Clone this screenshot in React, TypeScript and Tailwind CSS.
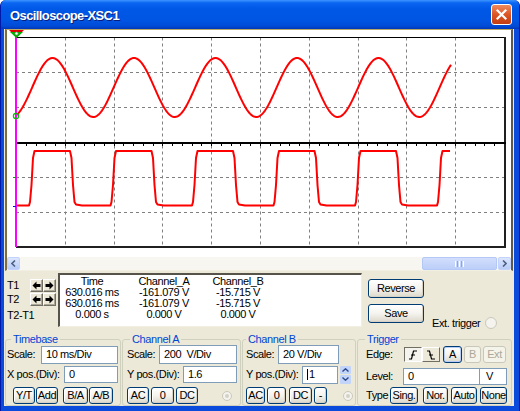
import type { ReactNode } from 'react';

const FONT = "font-['Liberation_Sans',Tahoma,Arial,sans-serif]";

function Btn({
  label,
  className = '',
}: {
  label: string;
  className?: string;
}): JSX.Element {
  return (
    <button
      type="button"
      className={`flex items-center justify-center rounded-[3px] border border-[#003c74] bg-linear-to-b from-white via-[#f4f3ee] to-[#dcd8cb] text-[11px] leading-none tracking-[-0.4px] text-black shadow-[inset_-1px_-1px_0_#d6d0c5,inset_1px_1px_0_#fff] ${className}`}
    >
      {label}
    </button>
  );
}

function GhostBtn({ label, className = '' }: { label: string; className?: string }): JSX.Element {
  return (
    <button
      type="button"
      className={`flex items-center justify-center rounded-[3px] border border-[#c9c7ba] bg-[#f5f4ea] text-[11px] leading-none tracking-[-0.4px] text-[#aca899] ${className}`}
    >
      {label}
    </button>
  );
}

function Field({ children, className = '' }: { children?: ReactNode; className?: string }): JSX.Element {
  return (
    <div
      className={`flex items-center whitespace-pre border border-[#7f9db9] bg-white pl-[4px] text-[11px] leading-none tracking-[-0.4px] text-black ${className}`}
    >
      {children}
    </div>
  );
}

function Label({ text, className = '' }: { text: string; className?: string }): JSX.Element {
  return (
    <span className={`shrink-0 whitespace-nowrap text-[11px] leading-[11px] tracking-[-0.4px] text-black ${className}`}>
      {text}
    </span>
  );
}

function Radio({ className = '' }: { className?: string }): JSX.Element {
  return (
    <span
      className={`flex h-[10px] w-[10px] items-center justify-center rounded-full border border-[#cac8bb] bg-[#f4f3ee] ${className}`}
    >
      <span className="h-[4px] w-[4px] rounded-full bg-[#d4d2c6]" />
    </span>
  );
}

function ArrowBtn({ dir }: { dir: 'left' | 'right' }): JSX.Element {
  return (
    <span className="flex h-[13px] w-[13px] items-center justify-center border-t border-l border-t-white border-l-white border-r border-b border-r-[#716f64] border-b-[#716f64] bg-[#ece9d8] shadow-[inset_-1px_-1px_0_#aca899]">
      <svg width="9" height="9" viewBox="0 0 9 9">
        {dir === 'left' ? (
          <path d="M0.5 4.5 L4.5 0.5 L4.5 3 L8.5 3 L8.5 6 L4.5 6 L4.5 8.5 Z" fill="#000" />
        ) : (
          <path d="M8.5 4.5 L4.5 0.5 L4.5 3 L0.5 3 L0.5 6 L4.5 6 L4.5 8.5 Z" fill="#000" />
        )}
      </svg>
    </span>
  );
}

function ScrollBtn({ dir }: { dir: 'left' | 'right' }): JSX.Element {
  return (
    <span className="flex h-[13px] w-[13px] shrink-0 items-center justify-center rounded-[2px] border border-[#c3d3fd] bg-linear-to-b from-[#dce6fd] to-[#b9cdf7]">
      <svg width="5" height="7" viewBox="0 0 5 7">
        {dir === 'left' ? (
          <path d="M4 0.5 L1 3.5 L4 6.5" fill="none" stroke="#4d6185" strokeWidth="1.6" />
        ) : (
          <path d="M1 0.5 L4 3.5 L1 6.5" fill="none" stroke="#4d6185" strokeWidth="1.6" />
        )}
      </svg>
    </span>
  );
}

function Scope(): JSX.Element {
  const vx = [65.5, 114.5, 162.5, 211.5, 260.5, 309.5, 358.5, 406.5, 455.5];
  const hy = [72.5, 107.5, 177.5, 212.5];
  const ticks = Array.from({ length: 49 }, (_, k) => Math.round(16 + 9.76 * (k + 1)) + 0.5);

  let sine = '';
  for (let x = 16; x <= 451; x += 1) {
    const y = 87.5 - 29.5 * Math.cos((2 * Math.PI * (x - 52.5)) / 81.5);
    sine += `${x === 16 ? 'M' : 'L'}${x} ${y.toFixed(2)} `;
  }

  const rises = [29, 110.5, 192, 273.5, 355, 437];
  let square = 'M16 205.5';
  rises.forEach((r, i) => {
    square += ` L${r} 205.5 L${r + 1} 202 L${r + 2.5} 185 L${r + 4} 158 L${r + 5.5} 151`;
    const f = r + 41;
    if (i < rises.length - 1) {
      square += ` L${f} 151 L${f + 1.5} 158 L${f + 3} 185 L${f + 4.5} 202 L${f + 6} 204.5 L${f + 12} 205.5`;
    } else {
      square += ' L450 151';
    }
  });

  return (
    <svg width="504" height="227" viewBox="7 30 504 227" className="block bg-white">
      {/* grid */}
      {vx.map((x) => (
        <line key={x} x1={x} y1={37.5} x2={x} y2={247} stroke="#808080" strokeDasharray="3 3" />
      ))}
      {hy.map((y) => (
        <line key={y} x1={16} y1={y} x2={505} y2={y} stroke="#808080" strokeDasharray="3 3" />
      ))}
      {/* frame */}
      <line x1={16} y1={37.5} x2={506} y2={37.5} stroke="#000" />
      <line x1={505} y1={37} x2={505} y2={248} stroke="#202020" strokeWidth={2} />
      <line x1={16} y1={247} x2={506} y2={247} stroke="#202020" strokeWidth={2} />
      {/* x axis */}
      <rect x={16} y={142} width={490} height={2} fill="#000" />
      {ticks.map((x) => (
        <line key={x} x1={x} y1={144} x2={x} y2={146} stroke="#000" />
      ))}
      {/* traces */}
      <path d={sine} fill="none" stroke="#ff0000" strokeWidth={2} strokeLinejoin="round" />
      <path d={square} fill="none" stroke="#ff0000" strokeWidth={2} strokeLinejoin="round" />
      {/* cursor */}
      <rect x={15} y={32} width={2} height={215} fill="#ff00ff" />
      <line x1={13} y1={177.5} x2={16} y2={177.5} stroke="#00a000" />
      <line x1={13} y1={206.5} x2={16} y2={206.5} stroke="#0000ff" />
      <circle cx={16} cy={116} r={2.6} fill="none" stroke="#00c000" strokeWidth={1.2} />
      <polygon points="9,30 24,30 16.5,37.5" fill="#e00000" />
      <polygon points="10,32 23,32 16.5,38" fill="#00b000" />
      <circle cx={16.5} cy={33.5} r={1.5} fill="#fff" stroke="#808080" strokeWidth={0.6} />
    </svg>
  );
}

function Screen(): JSX.Element {
  return (
    <div className="mx-[1px] flex flex-col border-t border-l-2 border-t-[#b9a76a] border-l-[#7c6d45] border-r-2 border-b border-r-[#5f5a48] border-b-[#f1efe2]">
      <Scope />
      <div className="flex h-[13px] bg-[#f7f6f1]">
        <ScrollBtn dir="left" />
        <div className="flex flex-1 justify-end pr-[1px]">
          <span className="flex w-[75px] items-center justify-center rounded-[2px] border border-[#b4c8f6] bg-linear-to-b from-[#d2defc] to-[#bccff8]">
            <span className="flex gap-[1px]">
              <span className="h-[6px] w-[1px] bg-white" />
              <span className="h-[6px] w-[1px] bg-[#8ca6e0]" />
              <span className="h-[6px] w-[1px] bg-white" />
              <span className="h-[6px] w-[1px] bg-[#8ca6e0]" />
              <span className="h-[6px] w-[1px] bg-white" />
            </span>
          </span>
        </div>
        <ScrollBtn dir="right" />
      </div>
    </div>
  );
}

function Readouts(): JSX.Element {
  const rows = [
    ['Time', 'Channel_A', 'Channel_B'],
    ['630.016 ms', '-161.079 V', '-15.715 V'],
    ['630.016 ms', '-161.079 V', '-15.715 V'],
    ['0.000 s', '0.000 V', '0.000 V'],
  ];
  return (
    <div className="flex h-[56px] items-start pt-[2px]">
      <div className="ml-[3px] flex w-[51px] flex-col pt-[6px]">
        <div className="flex h-[13px] items-center">
          <Label text="T1" className="w-[23px]" />
          <ArrowBtn dir="left" />
          <ArrowBtn dir="right" />
        </div>
        <div className="mt-[1px] flex h-[13px] items-center">
          <Label text="T2" className="w-[23px]" />
          <ArrowBtn dir="left" />
          <ArrowBtn dir="right" />
        </div>
        <Label text="T2-T1" className="mt-[4px]" />
      </div>
      <div className="h-[54px] w-[304px] border-t-2 border-l-2 border-t-[#55534a] border-l-[#55534a] border-r border-b border-r-[#f1efe2] border-b-[#f1efe2] bg-white pt-[1px]">
        <div className="grid grid-cols-[64px_80px_68px] text-[11px] leading-[11px] tracking-[-0.4px] text-black">
          {rows.map((row, i) =>
            row.map((cell, j) => (
              <span key={`${i}-${j}`} className="text-center whitespace-nowrap">
                {cell}
              </span>
            )),
          )}
        </div>
      </div>
      <div className="ml-[6px] flex w-[56px] flex-col gap-[6px] pt-[6px]">
        <Btn label="Reverse" className="h-[19px] w-[56px]" />
        <Btn label="Save" className="h-[19px] w-[56px]" />
      </div>
      <div className="ml-[8px] mt-[44px] flex h-[12px] items-center">
        <Label text="Ext. trigger" />
        <span className="ml-[5px] h-[12px] w-[12px] rounded-full border border-[#cac8bb] bg-[#f4f3ee]" />
      </div>
    </div>
  );
}

function Group({
  title,
  legendClass,
  className,
  children,
}: {
  title: string;
  legendClass: string;
  className: string;
  children: ReactNode;
}): JSX.Element {
  return (
    <fieldset className={`rounded-[3px] border border-[#d0d0bf] pb-[1px] ${className}`}>
      <legend
        className={`px-[2px] text-[11px] leading-[11px] tracking-[-0.4px] text-[#0046d5] ${legendClass}`}
      >
        {title}
      </legend>
      {children}
    </fieldset>
  );
}

function EdgeIcon({ rising }: { rising: boolean }): JSX.Element {
  return (
    <svg width="10" height="10" viewBox="0 0 10 10">
      {rising ? (
        <path d="M1 9 L3.5 9 L5.5 1 L9 1 M3 5 L7 5" fill="none" stroke="#000" strokeWidth="1.2" />
      ) : (
        <path d="M1 1 L3.5 1 L5.5 9 L9 9 M3 5 L7 5" fill="none" stroke="#000" strokeWidth="1.2" />
      )}
    </svg>
  );
}

function Controls(): JSX.Element {
  return (
    <div className="ml-[1px] mt-[7px] flex">
      <Group title="Timebase" legendClass="ml-[5px]" className="w-[116px]">
        <div className="flex h-[19px] items-center pl-[1px]">
          <Label text="Scale:" className="w-[34px]" />
          <Field className="h-[18px] w-[77px]">10 ms/Div</Field>
        </div>
        <div className="mt-[2px] flex h-[17px] items-center pl-[1px]">
          <Label text="X pos.(Div):" className="w-[57px]" />
          <Field className="h-[17px] w-[54px]">0</Field>
        </div>
        <div className="mt-[4px] flex h-[17px] pl-[7px]">
          <Btn label="Y/T" className="w-[22px]" />
          <Btn label="Add" className="ml-[1px] w-[22px]" />
          <Btn label="B/A" className="ml-[5px] w-[25px]" />
          <Btn label="A/B" className="ml-[1px] w-[24px]" />
        </div>
      </Group>

      <Group title="Channel A" legendClass="ml-[7px]" className="ml-[1px] w-[119px]">
        <div className="flex h-[19px] items-center pl-[4px]">
          <Label text="Scale:" className="w-[32px]" />
          <Field className="h-[19px] w-[78px]">200  V/Div</Field>
        </div>
        <div className="mt-[2px] flex h-[17px] items-center pl-[4px]">
          <Label text="Y pos.(Div):" className="w-[56px]" />
          <Field className="h-[17px] w-[54px]">1.6</Field>
        </div>
        <div className="mt-[4px] flex h-[17px] items-center pl-[4px]">
          <Btn label="AC" className="h-[17px] w-[22px]" />
          <Btn label="0" className="ml-[2px] h-[17px] w-[23px]" />
          <Btn label="DC" className="ml-[2px] h-[17px] w-[22px]" />
          <Radio className="ml-[24px]" />
        </div>
      </Group>

      <Group title="Channel B" legendClass="ml-[3px]" className="ml-[1px] w-[114px]">
        <div className="flex h-[19px] items-center pl-[3px]">
          <Label text="Scale:" className="w-[32px]" />
          <Field className="h-[19px] w-[61px]">20 V/Div</Field>
        </div>
        <div className="mt-[2px] flex h-[17px] items-center pl-[3px]">
          <Label text="Y pos.(Div):" className="w-[56px]" />
          <Field className="h-[18px] w-[36px]">
            <span className="mr-[1px] h-[11px] w-[1px] bg-black" />1
          </Field>
          <span className="ml-[2px] flex h-[18px] w-[11px] flex-col gap-[1px]">
            <span className="flex flex-1 items-center justify-center rounded-[1px] bg-[#c3d4fb]">
              <svg width="7" height="4" viewBox="0 0 7 4">
                <path d="M0.5 3.5 L3.5 0.8 L6.5 3.5" fill="none" stroke="#2c4a8a" strokeWidth="1.4" />
              </svg>
            </span>
            <span className="flex flex-1 items-center justify-center rounded-[1px] bg-[#c3d4fb]">
              <svg width="7" height="4" viewBox="0 0 7 4">
                <path d="M0.5 0.5 L3.5 3.2 L6.5 0.5" fill="none" stroke="#2c4a8a" strokeWidth="1.4" />
              </svg>
            </span>
          </span>
        </div>
        <div className="mt-[4px] flex h-[17px] items-center pl-[3px]">
          <Btn label="AC" className="h-[17px] w-[19px]" />
          <Btn label="0" className="ml-[2px] h-[17px] w-[19px]" />
          <Btn label="DC" className="ml-[3px] h-[17px] w-[23px]" />
          <Btn label="-" className="ml-[2px] h-[17px] w-[13px]" />
          <Radio className="ml-[16px]" />
        </div>
      </Group>

      <Group title="Trigger" legendClass="ml-[7px]" className="ml-[1px] w-[155px]">
        <div className="flex h-[19px] items-center pl-[8px]">
          <Label text="Edge:" className="w-[38px]" />
          <span className="flex h-[15px] w-[18px] items-center justify-center border-t border-l border-t-[#716f64] border-l-[#716f64] border-r border-b border-r-white border-b-white bg-[#f4f3ee]">
            <EdgeIcon rising />
          </span>
          <span className="flex h-[15px] w-[18px] items-center justify-center border-t border-l border-t-white border-l-white border-r border-b border-r-[#716f64] border-b-[#716f64] bg-[#ece9d8]">
            <EdgeIcon rising={false} />
          </span>
          <Btn
            label="A"
            className="ml-[3px] h-[17px] w-[19px] shadow-[inset_0_0_0_1px_#b6cdf7]"
          />
          <GhostBtn label="B" className="ml-[2px] h-[17px] w-[17px]" />
          <GhostBtn label="Ext" className="ml-[2px] h-[17px] w-[23px]" />
        </div>
        <div className="mt-[4px] flex h-[17px] items-center pl-[8px]">
          <Label text="Level:" className="w-[37px]" />
          <Field className="h-[17px] w-[77px]">0</Field>
          <Field className="h-[17px] w-[27px] border-l-0 pl-[6px]">V</Field>
        </div>
        <div className="mt-[2px] flex h-[17px] items-center pl-[8px]">
          <Label text="Type" className="w-[24px]" />
          <Btn label="Sing." className="h-[17px] w-[28px]" />
          <Btn label="Nor." className="ml-[5px] h-[17px] w-[25px]" />
          <Btn label="Auto" className="ml-[3px] h-[17px] w-[26px]" />
          <Btn label="None" className="ml-[3px] h-[17px] w-[27px]" />
        </div>
      </Group>
    </div>
  );
}

function TitleBar(): JSX.Element {
  return (
    <div className="flex h-[29px] shrink-0 items-center justify-between bg-[linear-gradient(to_bottom,#3d95ff_0%,#0a66f2_10%,#0058e6_30%,#0055e3_70%,#004bd6_90%,#0037b8_100%)] pr-[7px] pl-[9px]">
      <span className="pt-[2px] text-[13px] font-bold tracking-[-0.6px] text-white [text-shadow:1px_1px_0_#0a1c7a]">
        Oscilloscope-XSC1
      </span>
      <span className="flex h-[21px] w-[21px] items-center justify-center rounded-[3px] border border-white bg-linear-to-b from-[#f08a5c] via-[#dc5524] to-[#c43d12]">
        <svg width="11" height="11" viewBox="0 0 11 11">
          <path d="M1.5 1.5 L9.5 9.5 M9.5 1.5 L1.5 9.5" stroke="#fff" strokeWidth="2.2" strokeLinecap="square" />
        </svg>
      </span>
    </div>
  );
}

export default function App(): JSX.Element {
  return (
    <div
      className={`flex h-[411px] w-[520px] flex-col overflow-hidden rounded-t-[6px] border-x border-[#0019a8] bg-[#0a4bdc] ${FONT}`}
    >
      <TitleBar />
      <div className="mb-[5px] ml-[3px] mr-[5px] flex flex-1 flex-col bg-[#ece9d8]">
        <Screen />
        <Readouts />
        <Controls />
      </div>
    </div>
  );
}
